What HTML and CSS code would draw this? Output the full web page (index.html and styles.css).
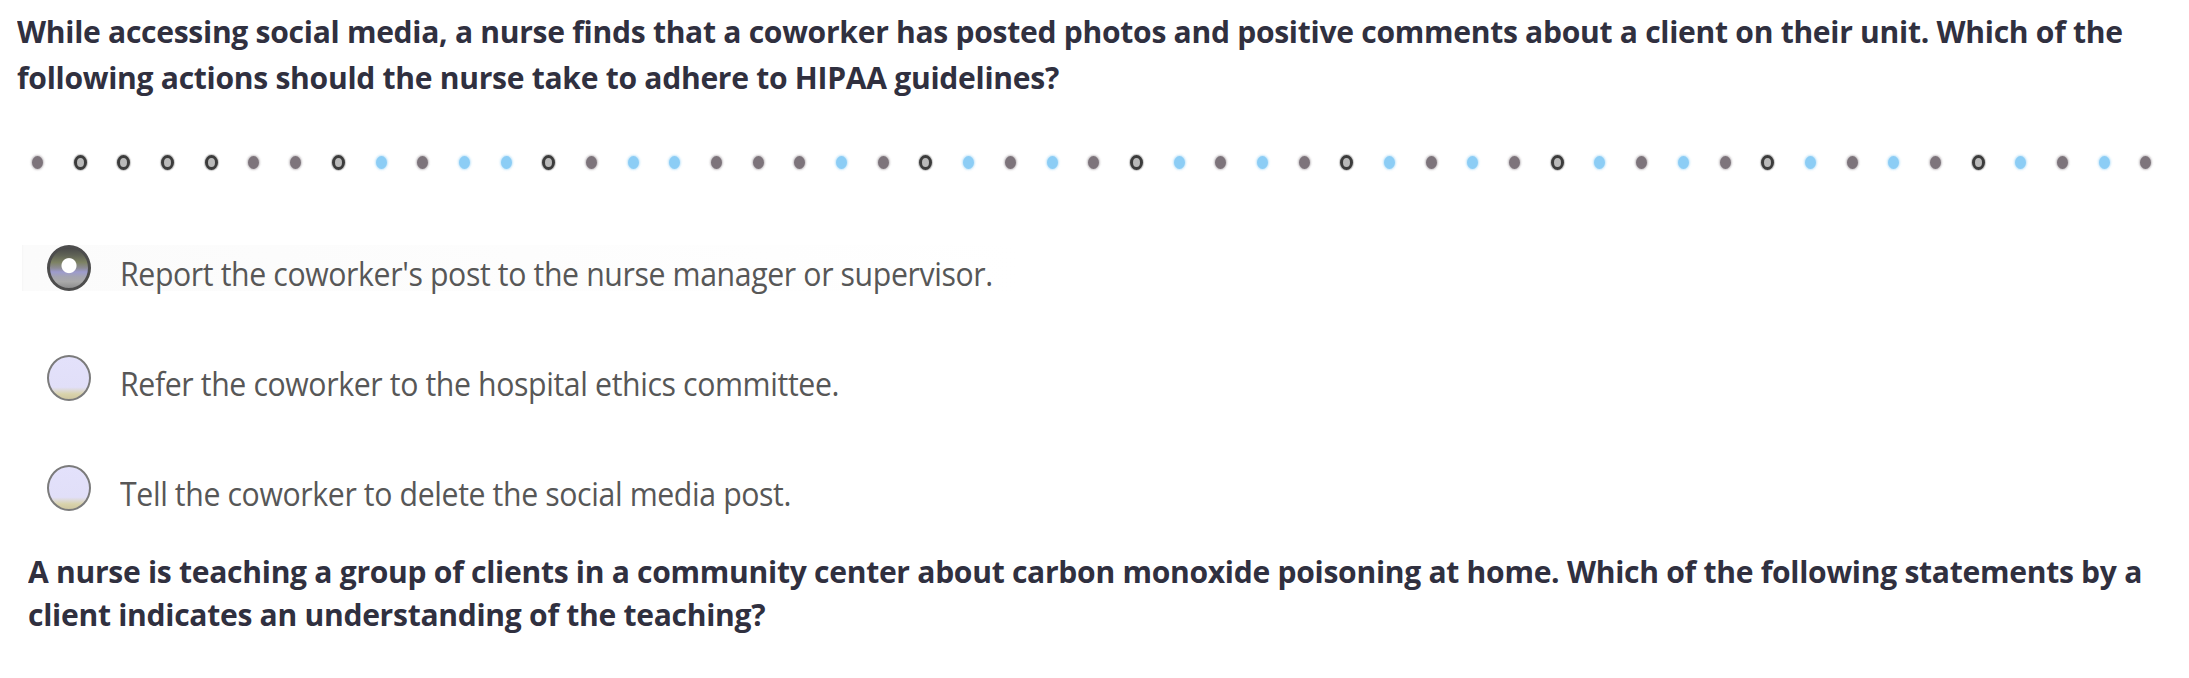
FILE: index.html
```html
<!DOCTYPE html>
<html lang="en">
<head>
<meta charset="utf-8">
<title>Quiz</title>
<link rel="stylesheet" href="styles.css">
</head>
<body>
<main class="page">
  <p class="question q1">While accessing social media, a nurse finds that a coworker has posted photos and positive comments about a client on their unit. Which of the following actions should the nurse take to adhere to HIPAA guidelines?</p>

  <div class="dots">
    <span class="dot g"></span><span class="dot r"></span><span class="dot r"></span><span class="dot r"></span><span class="dot r"></span><span class="dot g"></span><span class="dot g"></span><span class="dot r"></span><span class="dot b"></span><span class="dot g"></span>
    <span class="dot b"></span><span class="dot b"></span><span class="dot r"></span><span class="dot g"></span><span class="dot b"></span><span class="dot b"></span><span class="dot g"></span><span class="dot g"></span><span class="dot g"></span><span class="dot b"></span>
    <span class="dot g"></span><span class="dot r"></span><span class="dot b"></span><span class="dot g"></span><span class="dot b"></span><span class="dot g"></span><span class="dot r"></span><span class="dot b"></span><span class="dot g"></span><span class="dot b"></span>
    <span class="dot g"></span><span class="dot r"></span><span class="dot b"></span><span class="dot g"></span><span class="dot b"></span><span class="dot g"></span><span class="dot r"></span><span class="dot b"></span><span class="dot g"></span><span class="dot b"></span>
    <span class="dot g"></span><span class="dot r"></span><span class="dot b"></span><span class="dot g"></span><span class="dot b"></span><span class="dot g"></span><span class="dot r"></span><span class="dot b"></span><span class="dot g"></span><span class="dot b"></span>
    <span class="dot g"></span>
  </div>

  <ul class="options">
    <li class="option selected"><span class="radio on"></span><span class="label">Report the coworker's post to the nurse manager or supervisor.</span></li>
    <li class="option"><span class="radio"></span><span class="label">Refer the coworker to the hospital ethics committee.</span></li>
    <li class="option"><span class="radio"></span><span class="label">Tell the coworker to delete the social media post.</span></li>
  </ul>

  <p class="question q2">A nurse is teaching a group of clients in a community center about carbon monoxide poisoning at home. Which of the following statements by a client indicates an understanding of the teaching?</p>
</main>
</body>
</html>
```

FILE: styles.css
```css
* { box-sizing: border-box; }
html, body { margin: 0; padding: 0; background: #ffffff; }
body { width: 2189px; height: 678px; overflow: hidden; font-family: "Open Sans", "Noto Sans", sans-serif; }

.page {
  display: flex;
  flex-direction: column;
  align-items: flex-start;
  padding-top: 8px;
}

.question {
  margin: 0;
  width: 2230px;
  font-weight: 700;
  font-size: 31px;
  line-height: 46px;
  color: #30303f;
  letter-spacing: -0.3px;
  transform: scaleX(0.97);
  transform-origin: left top;
}
.q1 { margin-left: 17px; }
.q2 { margin-left: 28px; margin-top: 39px; line-height: 43px; }

.dots {
  margin-top: 54px;
  margin-left: 32px;
  width: 2120px;
  height: 16px;
  display: flex;
  justify-content: space-between;
  align-items: center;
}
.dot {
  display: block;
  width: 12px;
  height: 14px;
  border-radius: 50%;
}
.dot.g { background: #7d747b; box-shadow: 0 0 2px 1px rgba(125,116,123,0.45); width: 11px; height: 13px; }
.dot.b { background: #8ccdf5; box-shadow: 0 0 2px 1px rgba(140,205,245,0.5); width: 11px; height: 13px; }
.dot.r { background: #b9b9b9; border: 3px solid #3c3c3c; box-shadow: 0 0 1px 1px rgba(60,60,60,0.3); width: 13px; height: 15px; }

.options {
  list-style: none;
  margin: 75px 0 0 0;
  padding: 0;
  align-self: stretch;
  display: flex;
  flex-direction: column;
  gap: 64px;
}
.option {
  display: flex;
  align-items: center;
  gap: 29px;
  height: 46px;
  padding-left: 47px;
}
.option.selected {
  background: linear-gradient(to right, #f6f6f6 0, #fbfbfb 2px, #ffffff 1000px);
  margin-left: 22px;
  padding-left: 25px;
}
.radio {
  flex: none;
  width: 44px;
  height: 46px;
  border-radius: 50%;
  border: 2px solid #7b7b7b;
  background: linear-gradient(to bottom, #e3e1fb 0%, #e1dff8 72%, #d9d3ac 88%, #cfc7a0 100%);
}
.radio.on {
  border: 3px solid #4d4d4d;
  background:
    radial-gradient(circle at 50% 44%, #ffffff 0 7px, rgba(255,255,255,0) 8px),
    linear-gradient(to bottom, #4a4a4a 0%, #5f6256 18%, #7d8263 36%, #8d8c96 50%, #9d9bcd 60%, #a4a4b0 72%, #a9a9a9 84%, #8e8e8e 100%);
}
.label {
  font-size: 32px;
  font-weight: 400;
  color: #575757;
  line-height: 46px;
  padding-top: 12px;
  letter-spacing: -0.4px;
  transform: scaleX(0.945);
  transform-origin: left center;
}
```
